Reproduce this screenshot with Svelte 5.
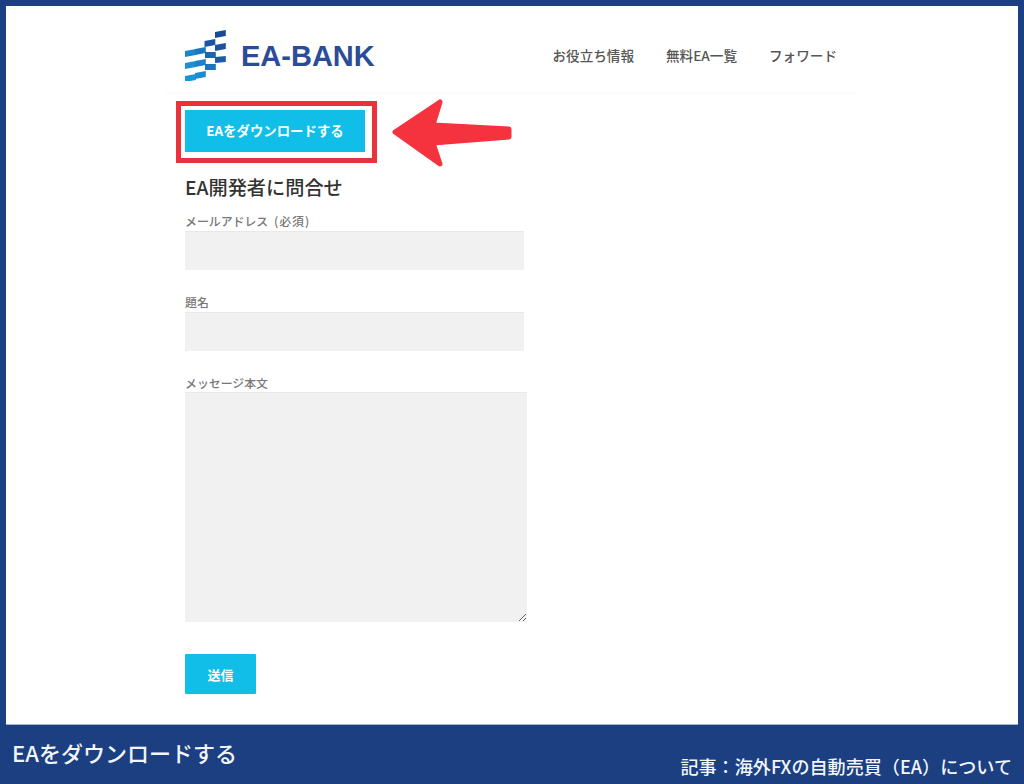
<script lang="ts">
  const nav = ['お役立ち情報', '無料EA一覧', 'フォワード'];
  // logo ribbon pieces: [x, y at left, y at right, colour]
  const pieces = [
    [215, 31, 29, '#1c4a96'],
    [204.5, 40, 38, '#1c55a4'],
    [215, 44, 42, '#1d52a0'],
    [185, 50, 48, '#1a86cc'],
    [195, 48, 46, '#1a78c2'],
    [205, 51, 51, '#1c66b2'],
    [215, 56, 55, '#1d5aa8'],
    [185, 62, 60, '#1a8fd2'],
    [195, 60, 58, '#1a82ca'],
    [205, 63, 63, '#1b74bc'],
    [185, 75, 73, '#1a96d8'],
    [195, 72, 70, '#1a8cd0']
  ] as const;
</script>

<div class="panel">
  <div class="wrap">
    <header class="site-head">
      <div class="logo">
        <svg class="mark" viewBox="185 28 42 52" width="42" height="52" aria-hidden="true">
          {#each pieces as [x, yl, yr, fill]}
            <polygon points="{x},{yl} {x + 10.8},{yr} {x + 10.8},{yr + 6} {x},{yl + 6}" {fill} />
          {/each}
        </svg>
        <span class="brand">EA-BANK</span>
      </div>
      <nav class="menu">
        {#each nav as item}
          <span>{item}</span>
        {/each}
      </nav>
    </header>

    <main class="content">
      <div class="callout">
        <button class="cta" type="button">EAをダウンロードする</button>
      </div>
      <svg class="arrow" viewBox="0 0 124 70" width="124" height="70" aria-hidden="true">
        <polygon points="5,34 50,4 43,27 119,31 119,39 43,45 50,66" />
      </svg>

      <h2>EA開発者に問合せ</h2>

      <form>
        <label for="mail">メールアドレス <span class="req">(必須)</span></label>
        <input id="mail" type="text" />
        <label for="subject">題名</label>
        <input id="subject" type="text" />
        <label class="tight" for="body">メッセージ本文</label>
        <textarea id="body"></textarea>
        <button class="send" type="button">送信</button>
      </form>
    </main>
  </div>
</div>

<footer class="caption">
  <span class="title">EAをダウンロードする</span>
  <span class="source">記事：海外FXの自動売買（EA）について</span>
</footer>

<style>
  :global(body) {
    margin: 0;
    background: #1b3f80;
    font-family: "Noto Sans CJK JP", "Noto Sans", sans-serif;
  }
  .panel {
    margin: 6px 6px 0;
    height: 718px;
    background: #fff;
    box-shadow: 0 1px 0 #9fb2d0;
    overflow: hidden;
  }
  .wrap {
    width: 693px;
    margin-left: 159px;
  }
  .site-head {
    display: flex;
    align-items: center;
    justify-content: space-between;
    height: 86px;
    padding: 12px 21px 0 20px;
    box-sizing: border-box;
    box-shadow: 0 3px 2px -1px rgba(0, 0, 0, 0.022);
  }
  .logo {
    display: flex;
    align-items: center;
    gap: 14px;
  }
  .mark {
    display: block;
  }
  .brand {
    font-family: "Liberation Sans", Arial, sans-serif;
    font-size: 29px;
    font-weight: 700;
    line-height: 1;
    color: #2b4c96;
    margin-top: 2px;
  }
  .menu {
    display: flex;
    gap: 32px;
    font-size: 13.6px;
    font-weight: 500;
    line-height: 20px;
    color: #555;
  }
  .content {
    position: relative;
    padding: 9px 0 0 20px;
  }
  .callout {
    box-sizing: border-box;
    width: 201px;
    height: 62px;
    margin-left: -9px;
    padding: 4px 7px 6px 4px;
    border: 5px solid #e8323c;
  }
  .cta {
    display: block;
    width: 180px;
    height: 42px;
    padding: 0;
    border: 0;
    background: #10bee7;
    color: #fff;
    font: 700 13.4px/1 "Noto Sans CJK JP", sans-serif;
  }
  .arrow {
    position: absolute;
    left: 225px;
    top: 6px;
  }
  .arrow polygon {
    fill: #f5333f;
    stroke: #f5333f;
    stroke-width: 5;
    stroke-linejoin: round;
  }
  h2 {
    margin: 11px 0 14px;
    font-size: 19.2px;
    font-weight: 500;
    line-height: 26px;
    color: #333;
  }
  form {
    display: block;
  }
  label {
    display: block;
    height: 14px;
    margin-bottom: 3px;
    font-size: 11.9px;
    font-weight: 500;
    line-height: 14px;
    color: #777;
    word-spacing: 3px;
  }
  label.tight {
    margin-bottom: 2px;
  }
  .req {
    letter-spacing: 1px;
  }
  input,
  textarea {
    display: block;
    box-sizing: border-box;
    padding: 0;
    border: 0;
    background: #f1f1f1;
    box-shadow: inset 0 1px 0 #e8e8e8;
    outline: none;
  }
  input {
    width: 339px;
    height: 39px;
    margin-bottom: 25px;
  }
  textarea {
    width: 342px;
    height: 230px;
    resize: both;
  }
  .send {
    display: block;
    width: 71px;
    height: 40px;
    margin-top: 32px;
    padding: 0;
    border: 0;
    border-radius: 1px;
    background: #10bee7;
    color: #fff;
    font: 700 13px/1 "Noto Sans CJK JP", sans-serif;
  }
  .caption {
    display: flex;
    justify-content: space-between;
    align-items: flex-end;
    box-sizing: border-box;
    height: 60px;
    padding: 0 12px 6px;
    color: #f2f5fa;
    font-weight: 500;
  }
  .title {
    margin-bottom: 11px;
    font-size: 22px;
    line-height: 30px;
  }
  .source {
    font-size: 18.1px;
    line-height: 24px;
  }
</style>
